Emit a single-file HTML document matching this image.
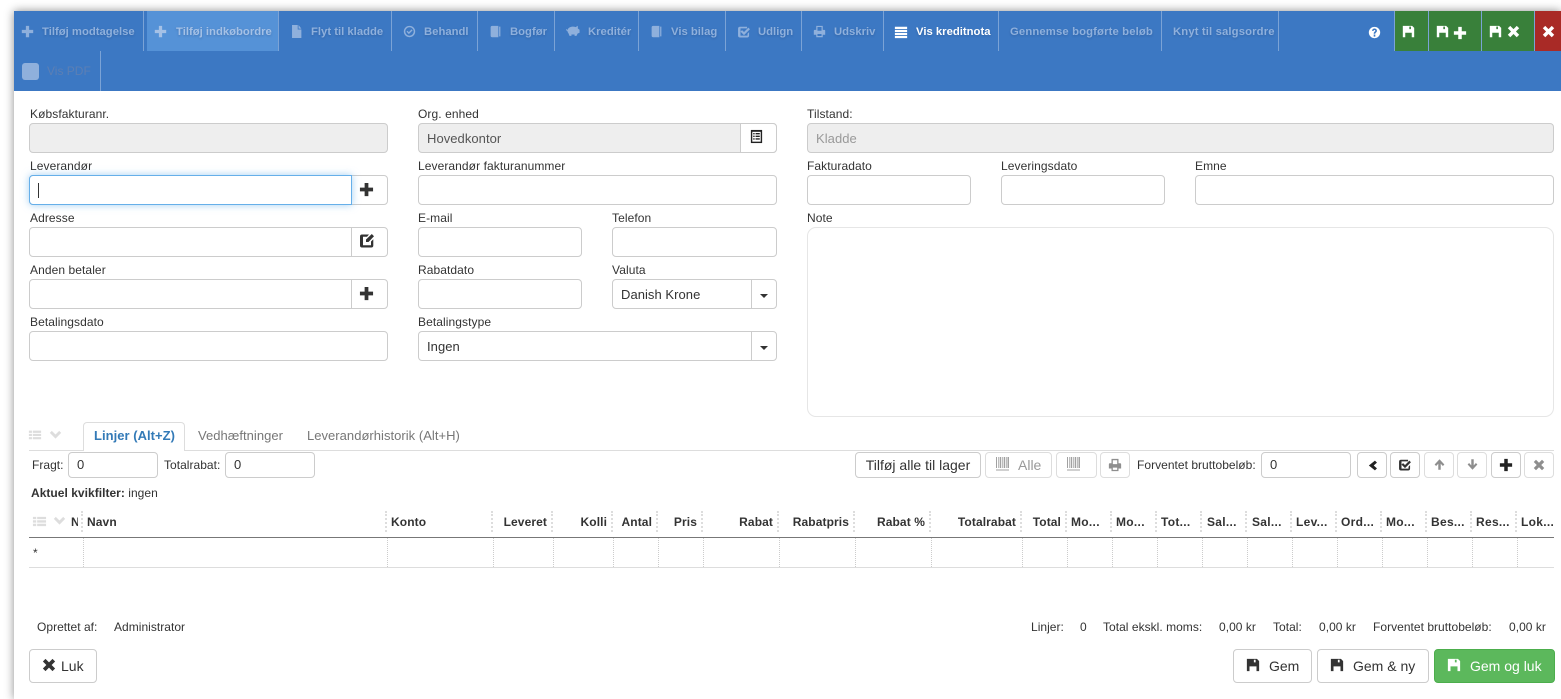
<!DOCTYPE html>
<html lang="da"><head><meta charset="utf-8"><title>Købsfaktura</title>
<style>
*{box-sizing:border-box}
html,body{margin:0;padding:0;width:1561px;height:699px;overflow:hidden;background:#fff;font-family:"Liberation Sans",Arial,sans-serif;font-size:12px;color:#333}
#root{position:absolute;left:0;top:0;width:1561px;height:699px;overflow:hidden;background:#fff}
.abs,.t,.i,.b,.sep,.ti,.ic{position:absolute}
.t{white-space:nowrap;line-height:14px;letter-spacing:.03px}
#panel{position:absolute;left:14px;top:11px;width:1547px;height:688px;background:#fff;box-shadow:0 0 9px rgba(0,0,0,.45)}
#topbar{position:absolute;left:14px;top:11px;width:1547px;height:80px;background:#3c78c3}
.ti{top:25px;font-weight:bold;font-size:11.3px;color:#8fb0dc;white-space:nowrap;line-height:14px;text-shadow:0 1px 2px rgba(30,60,110,.3)}
.sep{width:1px;top:11px;height:40px;background:#7ba3d6}
.ic{display:block}
.lb{position:absolute;white-space:nowrap;line-height:14px;color:#333;letter-spacing:.08px}
.i{height:30px;border:1px solid #ccc;border-radius:4px;background:#fff;font-size:13px;line-height:28px;padding-top:1px;padding-left:8px;color:#333;letter-spacing:.05px}
.dis{background:#eee;color:#555}
.dv{position:absolute;width:1px;height:30px;background:#ccc}
.b{height:26px;border:1px solid #ccc;border-radius:4px;background:#fff;top:452px}
.sm{height:26px;top:452px;line-height:24px;padding-top:0;padding-left:8px;font-size:13px}
.f{opacity:.55}
.h{position:absolute;top:515px;font-weight:bold;white-space:nowrap;line-height:14px;letter-spacing:.1px}
.hs{position:absolute;top:511px;width:0;height:21px;border-left:2px dotted #ddd}
.cs{position:absolute;top:538px;width:0;height:29px;border-left:1px dotted #ccc}
.big{position:absolute;top:649px;height:34px;border:1px solid #ccc;border-radius:4px;background:#fff;font-size:14px;line-height:32px;white-space:nowrap}
</style></head><body>
<svg width="0" height="0" style="position:absolute"><defs>
<symbol id="plus" viewBox="0 0 16 16"><path d="M6 1h4v5h5v4h-5v5H6v-5H1V6h5z"/></symbol>
<symbol id="x" viewBox="0 0 16 16"><path d="M4 1 8 5l4-4 3 3-4 4 4 4-3 3-4-4-4 4-3-3 4-4-4-4z"/></symbol>
<symbol id="save" viewBox="0 0 16 16"><path fill-rule="evenodd" d="M1 1h11.500L15 3.500V15H1zM9 2v3h2V2zM4 9.500V15h8V9.500z"/></symbol>
<symbol id="file" viewBox="0 0 16 16"><path d="M2.500 0h7v5.500H14V16H2.500zM10.500 0 14 4.500h-3.500z"/></symbol>
<symbol id="okc" viewBox="0 0 16 16"><path fill-rule="evenodd" d="M8 1a7 7 0 1 0 0 14A7 7 0 0 0 8 1zm0 1.800a5.200 5.200 0 1 1 0 10.400A5.200 5.200 0 0 1 8 2.800zM5.500 7 4.300 8.200 7.200 11.200 11.800 6.600 10.600 5.400 7.200 8.800z"/></symbol>
<symbol id="book" viewBox="0 0 16 16"><path d="M4 1h7.500v14H4a2 2 0 0 1-2-2V3a2 2 0 0 1 2-2zM12.500 2H14v12h-1.500z"/></symbol>
<symbol id="pig" viewBox="0 0 16 16"><path d="M0 5.500 1.500 7C2.500 4.500 5 3 8 3c1.200 0 2.200.2 3 .6L13.500 2v3.200L15.500 6.500V10l-2.200.8L12 13.500H9.800V12H6.200v1.500H4L2.800 10.500C2 9.500 1.700 8.800 1.600 8L0 7z"/></symbol>
<symbol id="chk" viewBox="0 0 16 16"><path d="M3.500 2H11.500v1.800H4v8.400h8V10l1.800-1.800V12a2.300 2.300 0 0 1-2.300 2.300h-8A2.300 2.300 0 0 1 1.200 12V4.300A2.300 2.300 0 0 1 3.500 2z"/><path d="M5.800 5.800 8 8l5-5 1.800 1.800L8 11.600 4 7.600z"/></symbol>
<symbol id="edit" viewBox="0 0 16 16"><path d="M3.500 1.500H10L8 3.800H4v8.400h8V8.500l2.300-2.300v6.300A2 2 0 0 1 12.300 14.500H3a2 2 0 0 1-2-2V3.500a2 2 0 0 1 2-2z"/><path d="M12.800 1 15 3.200 9.500 9H7V6.500z"/></symbol>
<symbol id="print" viewBox="0 0 16 16"><path fill-rule="evenodd" d="M4 1h8v5h2a1 1 0 0 1 1 1v5h-3v3H4v-3H1V7a1 1 0 0 1 1-1h2zM5.500 2.500V7h5V2.500zM5.500 11v2.500h5V11z"/></symbol>
<symbol id="list" viewBox="0 0 16 16"><path d="M1 2h14v2.500H1zM1 5.500h14V8H1zM1 9h14v2.500H1zM1 12.500h14V15H1z"/></symbol>
<symbol id="tbl" viewBox="0 0 16 16"><path d="M1 3h3.500v2.500H1zM5.500 3H15v2.500H5.500zM1 6.700h3.500v2.500H1zM5.500 6.700H15v2.500H5.500zM1 10.400h3.500v2.500H1zM5.500 10.400H15v2.500H5.500z"/></symbol>
<symbol id="q" viewBox="0 0 16 16"><path fill-rule="evenodd" d="M8 1a7 7 0 1 0 0 14A7 7 0 0 0 8 1zM5 6c0-2 1.500-3 3-3s3 1 3 2.800c0 2-2 2.200-2 3.700H7c0-2.500 2-2.700 2-3.700 0-.5-.4-.9-1-.9s-1 .4-1.100 1.100zM7 10.500h2V13H7z"/></symbol>
<symbol id="down" viewBox="0 0 16 16"><path d="M1 6l2.500-2.500L8 8l4.500-4.500L15 6l-7 7z"/></symbol>
<symbol id="left" viewBox="0 0 16 16"><path d="M11 2l2.500 2.500L9.500 8l4 3.500L11 14 3.500 8z"/></symbol>
<symbol id="up" viewBox="0 0 16 16"><path d="M8 1.500 14 8l-1.800 1.800L9.500 7v7.500h-3V7L3.800 9.800 2 8z"/></symbol>
<symbol id="dn" viewBox="0 0 16 16"><path d="M8 14.500 2 8l1.800-1.800L6.500 9V1.500h3V9l2.700-2.800L14 8z"/></symbol>
<symbol id="barc" viewBox="0 0 16 16"><path d="M1 1h1v11H1zM3 1h.7v11H3zM4.700 1h1.500v11H4.700zM7 1h.7v11H7zM8.700 1h1.500v11H8.700zM11 1h.7v11H11zM12.500 1H14v11h-1.500zM1 13.500h13v1H1z"/></symbol>
<symbol id="cal" viewBox="0 0 16 16"><path fill="#222" d="M2 1h12v14H2z"/><path fill="#fff" d="M3.500 3h9v10.500h-9z"/><path fill="#222" d="M4.500 4.200h1.500v1.500H4.500zM7 4.200h4.500v1.500H7zM4.500 7h1.500v1.500H4.500zM7 7h4.500v1.500H7zM4.500 9.800h1.500v1.500H4.500zM7 9.800h4.500v1.500H7z"/></symbol>
</defs></svg>
<div id="root">
<div id="panel"></div>
<div id="topbar"></div>

<!-- toolbar -->
<div class="abs" style="left:147px;top:11px;width:131px;height:40px;background:#5592d7"></div>
<svg class="ic" style="left:21px;top:25px" width="13" height="13" fill="#8fb0dc"><use href="#plus"/></svg><div class="ti" style="left:42px">Tilføj modtagelse</div>
<svg class="ic" style="left:154px;top:25px" width="13" height="13" fill="#a5c1e6"><use href="#plus"/></svg><div class="ti" style="left:176px;color:#a5c1e6">Tilføj indkøbordre</div>
<svg class="ic" style="left:290px;top:25px" width="13" height="13" fill="#8fb0dc"><use href="#file"/></svg><div class="ti" style="left:311px">Flyt til kladde</div>
<svg class="ic" style="left:403px;top:25px" width="13" height="13" fill="#8fb0dc"><use href="#okc"/></svg><div class="ti" style="left:424px">Behandl</div>
<svg class="ic" style="left:489px;top:25px" width="13" height="13" fill="#8fb0dc"><use href="#book"/></svg><div class="ti" style="left:510px">Bogfør</div>
<svg class="ic" style="left:565px;top:24px" width="16" height="14" fill="#8fb0dc"><use href="#pig"/></svg><div class="ti" style="left:588px">Kreditér</div>
<svg class="ic" style="left:650px;top:25px" width="13" height="13" fill="#8fb0dc"><use href="#book"/></svg><div class="ti" style="left:671px">Vis bilag</div>
<svg class="ic" style="left:737px;top:25px" width="14" height="14" fill="#8fb0dc"><use href="#chk"/></svg><div class="ti" style="left:758px">Udlign</div>
<svg class="ic" style="left:813px;top:25px" width="13" height="13" fill="#8fb0dc"><use href="#print"/></svg><div class="ti" style="left:834px">Udskriv</div>
<svg class="ic" style="left:894px;top:25px" width="14" height="14" fill="#fff"><use href="#list"/></svg><div class="ti" style="left:916px;color:#fff">Vis kreditnota</div>
<div class="ti" style="left:1010px;letter-spacing:.13px">Gennemse bogførte beløb</div>
<div class="ti" style="left:1173px;letter-spacing:.13px">Knyt til salgsordre</div>
<svg class="ic" style="left:1368px;top:26px" width="13" height="13" fill="#fff"><use href="#q"/></svg>
<div class="abs" style="left:1395px;top:11px;width:33px;height:40px;background:#39803a"></div>
<div class="abs" style="left:1429px;top:11px;width:52px;height:40px;background:#39803a"></div>
<div class="abs" style="left:1482px;top:11px;width:52px;height:40px;background:#39803a"></div>
<div class="abs" style="left:1535px;top:11px;width:26px;height:40px;background:#a92a26"></div>
<svg class="ic" style="left:1402px;top:25px" width="13" height="13" fill="#fff"><use href="#save"/></svg>
<svg class="ic" style="left:1436px;top:25px" width="13" height="13" fill="#fff"><use href="#save"/></svg>
<svg class="ic" style="left:1453px;top:26px" width="14" height="14" fill="#fff"><use href="#plus"/></svg>
<svg class="ic" style="left:1489px;top:25px" width="13" height="13" fill="#fff"><use href="#save"/></svg>
<svg class="ic" style="left:1507px;top:25px" width="13" height="13" fill="#fff"><use href="#x"/></svg>
<svg class="ic" style="left:1542px;top:25px" width="13" height="13" fill="#fff"><use href="#x"/></svg>
<div class="sep" style="left:143px"></div><div class="sep" style="left:278px"></div><div class="sep" style="left:391px"></div><div class="sep" style="left:477px"></div><div class="sep" style="left:554px"></div><div class="sep" style="left:638px"></div><div class="sep" style="left:725px"></div><div class="sep" style="left:801px"></div><div class="sep" style="left:883px"></div><div class="sep" style="left:998px"></div><div class="sep" style="left:1161px"></div><div class="sep" style="left:1278px"></div><div class="sep" style="left:1394px"></div><div class="sep" style="left:1428px"></div><div class="sep" style="left:1481px"></div><div class="sep" style="left:1534px"></div>
<div class="sep" style="left:100px;top:51px"></div>
<div class="abs" style="left:22px;top:63px;width:17px;height:17px;border-radius:3px;background:#8fb0dc"></div>
<div class="ti" style="left:47px;top:64px;color:#5c7fb4;text-shadow:none;font-weight:normal;font-size:12px">Vis PDF</div>

<!-- form column 1 -->
<div class="lb" style="left:30px;top:107px">Købsfakturanr.</div>
<div class="i dis" style="left:29px;top:123px;width:359px"></div>
<div class="lb" style="left:30px;top:159px">Leverandør</div>
<div class="i" style="left:29px;top:175px;width:359px"></div>
<div class="dv" style="left:351px;top:175px"></div>
<div class="abs" style="left:29px;top:175px;width:323px;height:30px;border:1px solid #66afe9;background:#fff;border-radius:4px 0 0 4px;box-shadow:0 0 8px rgba(102,175,233,.6)"></div>
<div class="abs" style="left:38px;top:183px;width:1px;height:15px;background:#333"></div>
<svg class="ic" style="left:359px;top:182px" width="15" height="15" fill="#333"><use href="#plus"/></svg>
<div class="lb" style="left:30px;top:211px">Adresse</div>
<div class="i" style="left:29px;top:227px;width:359px"></div><div class="dv" style="left:351px;top:227px"></div>
<svg class="ic" style="left:359px;top:233px" width="16" height="16" fill="#333"><use href="#edit"/></svg>
<div class="lb" style="left:30px;top:263px">Anden betaler</div>
<div class="i" style="left:29px;top:279px;width:359px"></div><div class="dv" style="left:351px;top:279px"></div>
<svg class="ic" style="left:359px;top:286px" width="15" height="15" fill="#333"><use href="#plus"/></svg>
<div class="lb" style="left:30px;top:315px">Betalingsdato</div>
<div class="i" style="left:29px;top:331px;width:359px"></div>

<!-- form column 2 -->
<div class="lb" style="left:418px;top:107px">Org. enhed</div>
<div class="i dis" style="left:418px;top:123px;width:359px">Hovedkontor</div>
<div class="abs" style="left:740px;top:123px;width:37px;height:30px;background:#fff;border:1px solid #ccc;border-radius:0 4px 4px 0"></div>
<svg class="ic" style="left:749px;top:129px" width="15" height="15"><use href="#cal"/></svg>
<div class="lb" style="left:418px;top:159px">Leverandør fakturanummer</div>
<div class="i" style="left:418px;top:175px;width:359px"></div>
<div class="lb" style="left:418px;top:211px">E-mail</div>
<div class="i" style="left:418px;top:227px;width:164px"></div>
<div class="lb" style="left:612px;top:211px">Telefon</div>
<div class="i" style="left:612px;top:227px;width:165px"></div>
<div class="lb" style="left:418px;top:263px">Rabatdato</div>
<div class="i" style="left:418px;top:279px;width:164px"></div>
<div class="lb" style="left:612px;top:263px">Valuta</div>
<div class="i" style="left:612px;top:279px;width:165px">Danish Krone</div><div class="dv" style="left:751px;top:279px"></div>
<div class="abs" style="left:760px;top:294px;border:4px solid transparent;border-top-color:#333;border-bottom:0"></div>
<div class="lb" style="left:418px;top:315px">Betalingstype</div>
<div class="i" style="left:418px;top:331px;width:359px">Ingen</div><div class="dv" style="left:751px;top:331px"></div>
<div class="abs" style="left:760px;top:346px;border:4px solid transparent;border-top-color:#333;border-bottom:0"></div>

<!-- form column 3 -->
<div class="lb" style="left:807px;top:107px">Tilstand:</div>
<div class="i dis" style="left:807px;top:123px;width:747px;color:#999">Kladde</div>
<div class="lb" style="left:807px;top:159px">Fakturadato</div>
<div class="i" style="left:807px;top:175px;width:164px"></div>
<div class="lb" style="left:1001px;top:159px">Leveringsdato</div>
<div class="i" style="left:1001px;top:175px;width:164px"></div>
<div class="lb" style="left:1195px;top:159px">Emne</div>
<div class="i" style="left:1195px;top:175px;width:359px"></div>
<div class="lb" style="left:807px;top:211px">Note</div>
<div class="abs" style="left:807px;top:227px;width:747px;height:190px;border:1px solid #e6e6e6;border-radius:9px;background:#fff"></div>

<!-- tabs -->
<svg class="ic" style="left:28px;top:428px" width="14" height="14" fill="#ddd"><use href="#tbl"/></svg>
<svg class="ic" style="left:49px;top:428px" width="13" height="13" fill="#ddd"><use href="#down"/></svg>
<div class="abs" style="left:29px;top:450px;width:1525px;height:1px;background:#ddd"></div>
<div class="abs" style="left:83px;top:422px;width:102px;height:29px;border:1px solid #ddd;border-bottom:0;border-radius:4px 4px 0 0;background:#fff"></div>
<div class="t" style="left:94px;top:429px;font-size:13px;font-weight:bold;color:#337ab7">Linjer (Alt+Z)</div>
<div class="t" style="left:198px;top:429px;font-size:13px;color:#777">Vedhæftninger</div>
<div class="t" style="left:307px;top:429px;font-size:13px;color:#777">Leverandørhistorik (Alt+H)</div>

<!-- filter row -->
<div class="t" style="left:32px;top:458px">Fragt:</div>
<div class="i sm" style="left:68px;width:90px">0</div>
<div class="t" style="left:164px;top:458px">Totalrabat:</div>
<div class="i sm" style="left:225px;width:90px">0</div>
<div class="t" style="left:31px;top:486px"><b>Aktuel kvikfilter:</b> ingen</div>

<div class="b" style="left:855px;width:126px;font-size:14px;line-height:24px;text-align:center;white-space:nowrap">Tilføj alle til lager</div>
<div class="b" style="left:985px;width:67px;color:#999;font-size:14px;line-height:24px;padding-left:32px;border-color:#ddd">Alle</div>
<svg class="ic f" style="left:995px;top:456px" width="16" height="16" fill="#555"><use href="#barc"/></svg>
<div class="b" style="left:1056px;width:41px;border-color:#ddd"></div>
<svg class="ic f" style="left:1066px;top:456px" width="16" height="16" fill="#555"><use href="#barc"/></svg>
<div class="b" style="left:1100px;width:30px;border-color:#ddd"></div>
<svg class="ic f" style="left:1108px;top:458px" width="14" height="14" fill="#333"><use href="#print"/></svg>
<div class="t" style="left:1137px;top:458px">Forventet bruttobeløb:</div>
<div class="i sm" style="left:1261px;width:90px">0</div>
<div class="b" style="left:1357px;width:30px"></div><svg class="ic" style="left:1366px;top:459px" width="13" height="13" fill="#222"><use href="#left"/></svg>
<div class="b" style="left:1390px;width:30px"></div><svg class="ic" style="left:1398px;top:458px" width="14" height="14" fill="#333"><use href="#chk"/></svg>
<div class="b" style="left:1424px;width:30px;border-color:#ddd"></div><svg class="ic f" style="left:1433px;top:458px" width="13" height="13" fill="#333"><use href="#up"/></svg>
<div class="b" style="left:1457px;width:30px;border-color:#ddd"></div><svg class="ic f" style="left:1466px;top:458px" width="13" height="13" fill="#333"><use href="#dn"/></svg>
<div class="b" style="left:1491px;width:30px"></div><svg class="ic" style="left:1499px;top:458px" width="14" height="14" fill="#222"><use href="#plus"/></svg>
<div class="b" style="left:1524px;width:30px;border-color:#ddd"></div><svg class="ic f" style="left:1533px;top:459px" width="12" height="12" fill="#333"><use href="#x"/></svg>

<!-- grid -->
<svg class="ic" style="left:32px;top:514px" width="15" height="15" fill="#ddd"><use href="#tbl"/></svg>
<svg class="ic" style="left:53px;top:514px" width="13" height="13" fill="#ddd"><use href="#down"/></svg>
<div class="h" style="left:71px;width:7px;overflow:hidden">Nr</div>
<div class="h" style="left:87px">Navn</div>
<div class="h" style="left:391px">Konto</div>
<div class="h" style="right:1014px">Leveret</div>
<div class="h" style="right:954px">Kolli</div>
<div class="h" style="right:909px">Antal</div>
<div class="h" style="right:864px">Pris</div>
<div class="h" style="right:788px">Rabat</div>
<div class="h" style="right:712px">Rabatpris</div>
<div class="h" style="right:636px">Rabat %</div>
<div class="h" style="right:545px">Totalrabat</div>
<div class="h" style="right:500px">Total</div>
<div class="h" style="left:1071px;letter-spacing:.3px">Mo...</div>
<div class="h" style="left:1116px;letter-spacing:.3px">Mo...</div>
<div class="h" style="left:1161px;letter-spacing:.3px">Tot...</div>
<div class="h" style="left:1207px;letter-spacing:.3px">Sal...</div>
<div class="h" style="left:1252px;letter-spacing:.3px">Sal...</div>
<div class="h" style="left:1296px;letter-spacing:.3px">Lev...</div>
<div class="h" style="left:1341px;letter-spacing:.3px">Ord...</div>
<div class="h" style="left:1386px;letter-spacing:.3px">Mo...</div>
<div class="h" style="left:1431px;letter-spacing:.3px">Bes...</div>
<div class="h" style="left:1476px;letter-spacing:.3px">Res...</div>
<div class="h" style="left:1521px;letter-spacing:.3px">Lok...</div>
<div class="hs" style="left:81px"></div><div class="hs" style="left:385px"></div><div class="hs" style="left:491px"></div><div class="hs" style="left:551px"></div><div class="hs" style="left:611px"></div><div class="hs" style="left:656px"></div><div class="hs" style="left:701px"></div><div class="hs" style="left:777px"></div><div class="hs" style="left:853px"></div><div class="hs" style="left:929px"></div><div class="hs" style="left:1020px"></div><div class="hs" style="left:1065px"></div><div class="hs" style="left:1110px"></div><div class="hs" style="left:1155px"></div><div class="hs" style="left:1200px"></div><div class="hs" style="left:1245px"></div><div class="hs" style="left:1290px"></div><div class="hs" style="left:1335px"></div><div class="hs" style="left:1380px"></div><div class="hs" style="left:1425px"></div><div class="hs" style="left:1470px"></div><div class="hs" style="left:1515px"></div>
<div class="abs" style="left:29px;top:537px;width:1525px;height:1px;background:#777"></div>
<div class="abs" style="left:29px;top:567px;width:1525px;height:1px;background:#ddd"></div>
<div class="cs" style="left:83px"></div><div class="cs" style="left:387px"></div><div class="cs" style="left:493px"></div><div class="cs" style="left:553px"></div><div class="cs" style="left:613px"></div><div class="cs" style="left:658px"></div><div class="cs" style="left:703px"></div><div class="cs" style="left:779px"></div><div class="cs" style="left:855px"></div><div class="cs" style="left:931px"></div><div class="cs" style="left:1022px"></div><div class="cs" style="left:1067px"></div><div class="cs" style="left:1112px"></div><div class="cs" style="left:1157px"></div><div class="cs" style="left:1202px"></div><div class="cs" style="left:1247px"></div><div class="cs" style="left:1292px"></div><div class="cs" style="left:1337px"></div><div class="cs" style="left:1382px"></div><div class="cs" style="left:1427px"></div><div class="cs" style="left:1472px"></div><div class="cs" style="left:1517px"></div>
<div class="t" style="left:33px;top:546px">*</div>

<!-- footer -->
<div class="t" style="left:37px;top:620px">Oprettet af:</div>
<div class="t" style="left:114px;top:620px">Administrator</div>
<div class="t" style="left:1031px;top:620px">Linjer:</div>
<div class="t" style="left:1080px;top:620px">0</div>
<div class="t" style="left:1103px;top:620px">Total ekskl. moms:</div>
<div class="t" style="left:1219px;top:620px">0,00 kr</div>
<div class="t" style="left:1273px;top:620px">Total:</div>
<div class="t" style="left:1319px;top:620px">0,00 kr</div>
<div class="t" style="left:1373px;top:620px">Forventet bruttobeløb:</div>
<div class="t" style="left:1509px;top:620px">0,00 kr</div>

<div class="big" style="left:29px;width:68px;padding-left:31px">Luk</div>
<svg class="ic" style="left:42px;top:658px" width="14" height="14" fill="#333"><use href="#x"/></svg>
<div class="big" style="left:1233px;width:79px;padding-left:35px">Gem</div>
<svg class="ic" style="left:1246px;top:658px" width="14" height="14" fill="#333"><use href="#save"/></svg>
<div class="big" style="left:1317px;width:112px;padding-left:35px">Gem &amp; ny</div>
<svg class="ic" style="left:1330px;top:658px" width="14" height="14" fill="#333"><use href="#save"/></svg>
<div class="big" style="left:1434px;width:121px;padding-left:35px;background:#5cb85c;border-color:#4cae4c;color:#fff">Gem og luk</div>
<svg class="ic" style="left:1447px;top:658px" width="14" height="14" fill="#fff"><use href="#save"/></svg>
</div>
</body></html>
